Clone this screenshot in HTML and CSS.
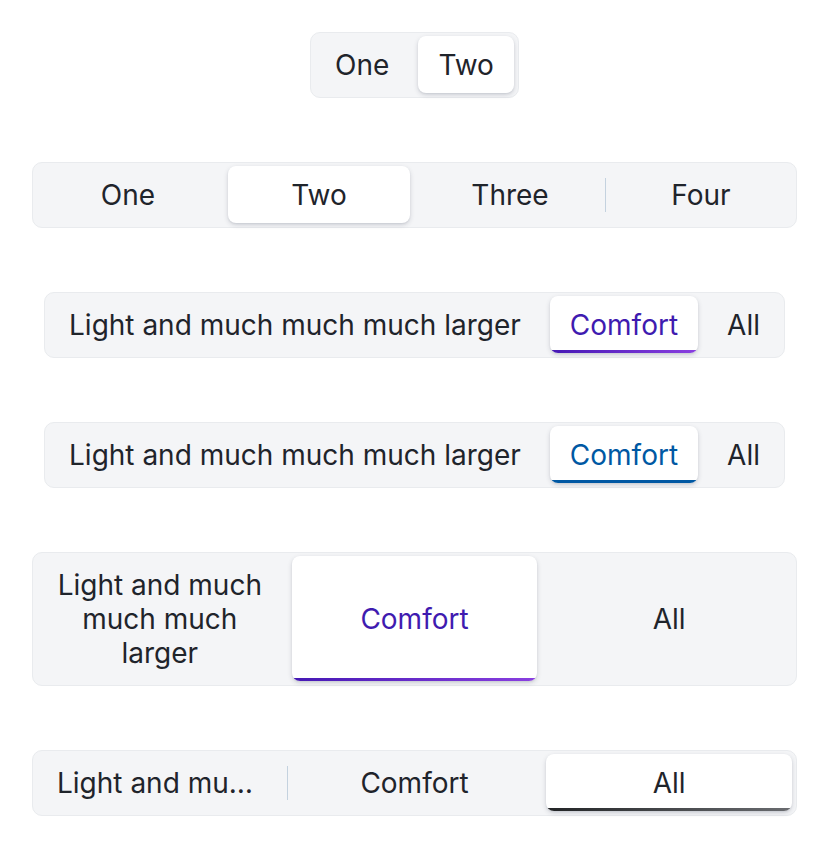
FILE: index.html
```html
<!DOCTYPE html>
<html lang="en">
<head>
<meta charset="utf-8">
<title>Segmented controls</title>
<link rel="stylesheet" href="styles.css">
</head>
<body>
<main class="page">
  <div class="seg">
    <button class="item">One</button>
    <span class="sep hidden"></span>
    <button class="item active">Two</button>
  </div>

  <div class="seg full">
    <button class="item">One</button>
    <span class="sep hidden"></span>
    <button class="item active">Two</button>
    <span class="sep hidden"></span>
    <button class="item">Three</button>
    <span class="sep"></span>
    <button class="item">Four</button>
  </div>

  <div class="seg">
    <button class="item">Light and much much much larger</button>
    <span class="sep hidden"></span>
    <button class="item active bar purple">Comfort</button>
    <span class="sep hidden"></span>
    <button class="item">All</button>
  </div>

  <div class="seg">
    <button class="item">Light and much much much larger</button>
    <span class="sep hidden"></span>
    <button class="item active bar blue">Comfort</button>
    <span class="sep hidden"></span>
    <button class="item">All</button>
  </div>

  <div class="seg full">
    <button class="item">Light and much much much larger</button>
    <span class="sep hidden"></span>
    <button class="item active bar purple">Comfort</button>
    <span class="sep hidden"></span>
    <button class="item">All</button>
  </div>

  <div class="seg full">
    <button class="item"><span class="trunc">Light and much much much larger</span></button>
    <span class="sep"></span>
    <button class="item">Comfort</button>
    <span class="sep hidden"></span>
    <button class="item active bar dark">All</button>
  </div>
</main>
</body>
</html>
```

FILE: styles.css
```css
* { box-sizing: border-box; }

html, body {
  margin: 0;
  padding: 0;
  background: #ffffff;
}

body {
  font-family: Inter, "Noto Sans", "Liberation Sans", sans-serif;
  color: #1f242b;
}

.page {
  padding: 32px 31px 32px 32px;
  display: flex;
  flex-direction: column;
  align-items: center;
  gap: 64px;
}

.seg {
  display: flex;
  align-items: stretch;
  padding: 3px 4px 4px 4px;
  background: #f4f5f7;
  border: 1px solid #e9ebee;
  border-radius: 10px;
}

.seg.full {
  align-self: stretch;
}

.seg.full .item {
  flex: 1 1 0;
  min-width: 0;
}

.item {
  position: relative;
  overflow: hidden;
  font: inherit;
  font-size: 28px;
  line-height: 34px;
  color: #1f242b;
  background: transparent;
  border: 0;
  border-radius: 8px;
  padding: 12px 20px 11px;
  text-align: center;
  white-space: normal;
  cursor: pointer;
}

.item.active {
  background: #ffffff;
  box-shadow: 0 2px 5px rgba(30, 40, 60, 0.16), 0 1px 2px rgba(30, 40, 60, 0.08);
}

.item.bar::after {
  content: "";
  position: absolute;
  left: 0;
  right: 0;
  bottom: 0;
  height: 3px;
}

.item.purple { color: #3f1bb0; }
.item.purple::after { background: linear-gradient(90deg, #4518b4, #8a3fe0); }

.item.blue { color: #0058a3; }
.item.blue::after { background: #0058a3; }

.item.dark::after { background: linear-gradient(90deg, #222426, #6a6c70); }

.sep {
  flex: 0 0 1px;
  width: 1px;
  height: 34px;
  margin: 0 4px;
  align-self: center;
  background: #c4d2df;
}

.sep.hidden {
  background: transparent;
}

.trunc {
  display: block;
  white-space: nowrap;
  overflow: hidden;
  text-overflow: ellipsis;
}
```
